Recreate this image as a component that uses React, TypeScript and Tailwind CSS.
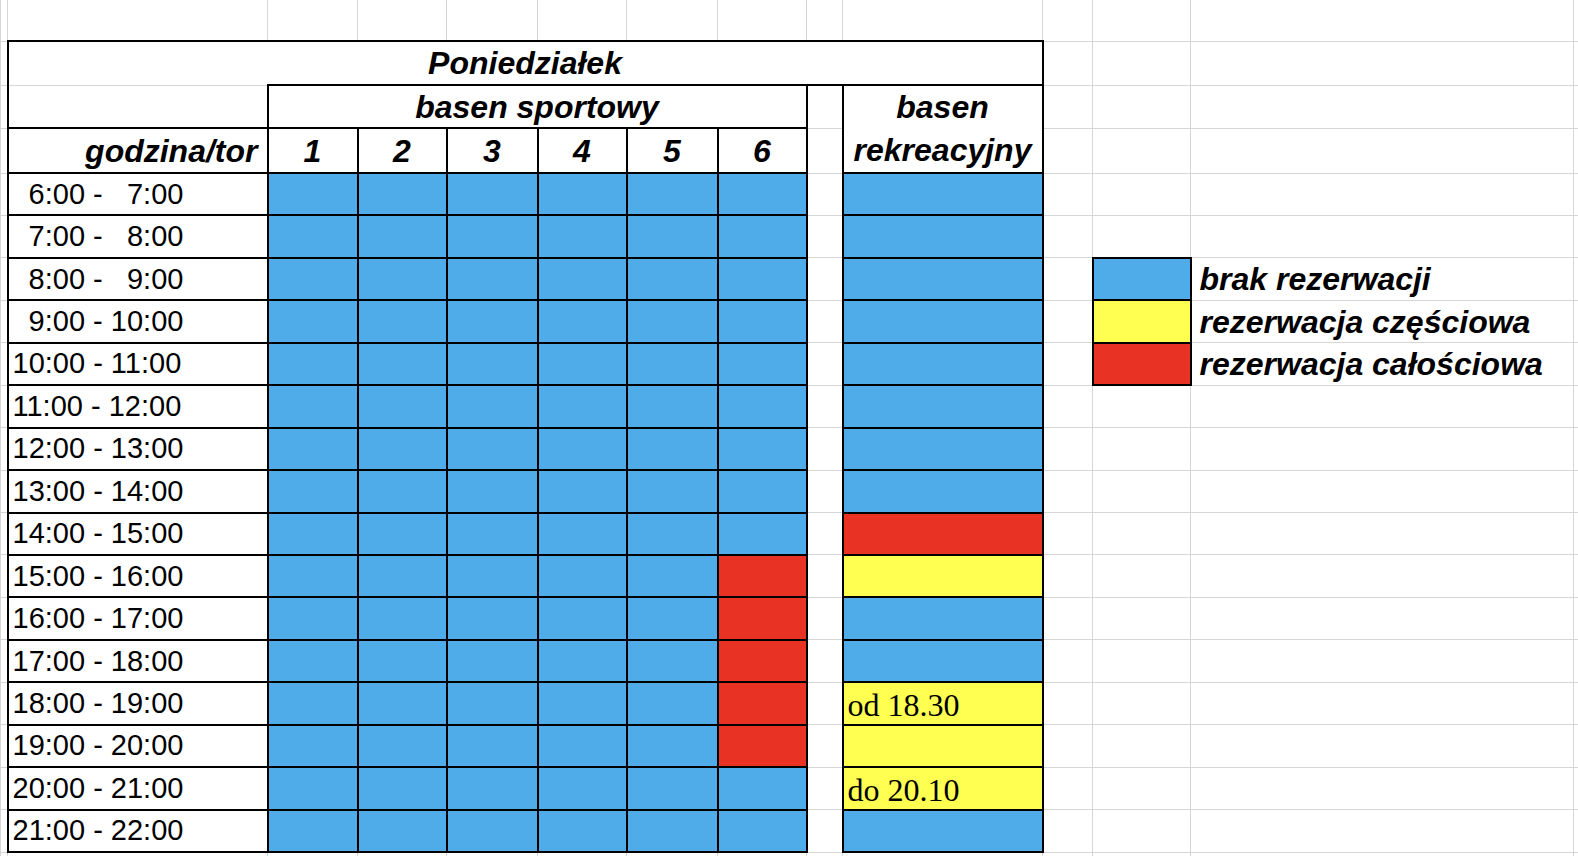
import React from 'react';

type Fill = 'b' | 'y' | 'r';

const fillClass: Record<Fill, string> = {
  b: 'bg-[#4facE8]',
  y: 'bg-[#feff50]',
  r: 'bg-[#e83324]',
};

const slots = [
  '  6:00 -   7:00',
  '  7:00 -   8:00',
  '  8:00 -   9:00',
  '  9:00 - 10:00',
  '10:00 - 11:00',
  '11:00 - 12:00',
  '12:00 - 13:00',
  '13:00 - 14:00',
  '14:00 - 15:00',
  '15:00 - 16:00',
  '16:00 - 17:00',
  '17:00 - 18:00',
  '18:00 - 19:00',
  '19:00 - 20:00',
  '20:00 - 21:00',
  '21:00 - 22:00',
];

// basen rekreacyjny
const rec: { fill: Fill; note?: string }[] = [
  { fill: 'b' }, { fill: 'b' }, { fill: 'b' }, { fill: 'b' },
  { fill: 'b' }, { fill: 'b' }, { fill: 'b' }, { fill: 'b' },
  { fill: 'r' }, { fill: 'y' }, { fill: 'b' }, { fill: 'b' },
  { fill: 'y', note: 'od 18.30' }, { fill: 'y' }, { fill: 'y', note: 'do 20.10' }, { fill: 'b' },
];

const lanes = [1, 2, 3, 4, 5, 6];
const laneFill = (row: number, lane: number): Fill => (lane === 6 && row >= 9 && row <= 13 ? 'r' : 'b');

const legend: { fill: Fill; label: string }[] = [
  { fill: 'b', label: 'brak rezerwacji' },
  { fill: 'y', label: 'rezerwacja częściowa' },
  { fill: 'r', label: 'rezerwacja całościowa' },
];

const cell = 'border border-[#d6d6d6] p-0';
const box = 'border-2 border-black';
const head = "font-['Liberation_Sans',Arial,sans-serif] font-bold italic text-[32px] text-black";

function Blank({ className = '' }: { className?: string }) {
  return <td className={`${cell} ${className}`} />;
}

export default function App() {
  return (
    <div className="w-[1578px] h-[856px] overflow-hidden bg-white">
      <table className="table-fixed border-collapse w-[1578px]">
        <colgroup>
          <col className="w-[7px]" />
          <col className="w-[260px]" />
          <col className="w-[90px]" />
          <col className="w-[89px]" />
          <col className="w-[91px]" />
          <col className="w-[89px]" />
          <col className="w-[91px]" />
          <col className="w-[89px]" />
          <col className="w-[36px]" />
          <col className="w-[200px]" />
          <col className="w-[50px]" />
          <col className="w-[98px]" />
          <col className="w-[383px]" />
          <col className="w-[5px]" />
        </colgroup>
        <tbody>
          <tr className="h-[41px]">
            {Array.from({ length: 14 }).map((_, i) => (
              <Blank key={i} className="border-t-0" />
            ))}
          </tr>

          <tr className="h-[44px]">
            <Blank />
            <td colSpan={9} className={`${cell} border-t-2 border-t-black border-l-2 border-l-black border-r-2 border-r-black text-center align-middle leading-none ${head}`}>
              Poniedziałek
            </td>
            <Blank />
            <Blank />
            <Blank />
            <Blank />
          </tr>

          <tr className="h-[43px]">
            <Blank />
            <Blank className="border-l-2 border-l-black border-b-2 border-b-black" />
            <td colSpan={6} className={`${cell} ${box} text-center align-middle leading-none ${head}`}>
              basen sportowy
            </td>
            <Blank className="border-t-2 border-t-black border-x-2 border-x-black" />
            <td rowSpan={2} className={`${cell} ${box} text-center align-middle leading-[43px] ${head}`}>
              basen
              <br />
              rekreacyjny
            </td>
            <Blank />
            <Blank />
            <Blank />
            <Blank />
          </tr>

          <tr className="h-[45px]">
            <Blank />
            <td className={`${cell} ${box} text-right align-middle pr-[9px] leading-none ${head}`}>godzina/tor</td>
            {lanes.map((l) => (
              <td key={l} className={`${cell} ${box} text-center align-middle leading-none ${head}`}>
                {l}
              </td>
            ))}
            <Blank className="border-x-2 border-x-black" />
            <Blank />
            <Blank />
            <Blank />
            <Blank />
          </tr>

          {slots.map((slot, row) => {
            const leg = legend[row - 2];
            const r = rec[row];
            return (
              <tr key={slot} className="h-[42.45px]">
                <Blank />
                <td className={`${cell} ${box} align-middle pl-[4px] whitespace-pre font-['Liberation_Sans',Arial,sans-serif] text-[29px] leading-none text-black`}>
                  {slot}
                </td>
                {lanes.map((l) => (
                  <td key={l} className={`${cell} ${box} ${fillClass[laneFill(row, l)]}`} />
                ))}
                <Blank className="border-x-2 border-x-black" />
                <td className={`${cell} ${box} ${fillClass[r.fill]} align-bottom pl-[4px] pb-[3px] font-['Liberation_Serif','Times_New_Roman',serif] text-[32px] leading-none text-black`}>
                  {r.note}
                </td>
                <Blank />
                {leg ? (
                  <>
                    <td className={`${cell} ${box} ${fillClass[leg.fill]}`} />
                    <td className={`${cell} align-middle pl-[8px] leading-none ${head}`}>{leg.label}</td>
                  </>
                ) : (
                  <>
                    <Blank />
                    <Blank />
                  </>
                )}
                <Blank />
              </tr>
            );
          })}

          <tr className="h-[20px]">
            {Array.from({ length: 14 }).map((_, i) => (
              <Blank key={i} />
            ))}
          </tr>
        </tbody>
      </table>
    </div>
  );
}
